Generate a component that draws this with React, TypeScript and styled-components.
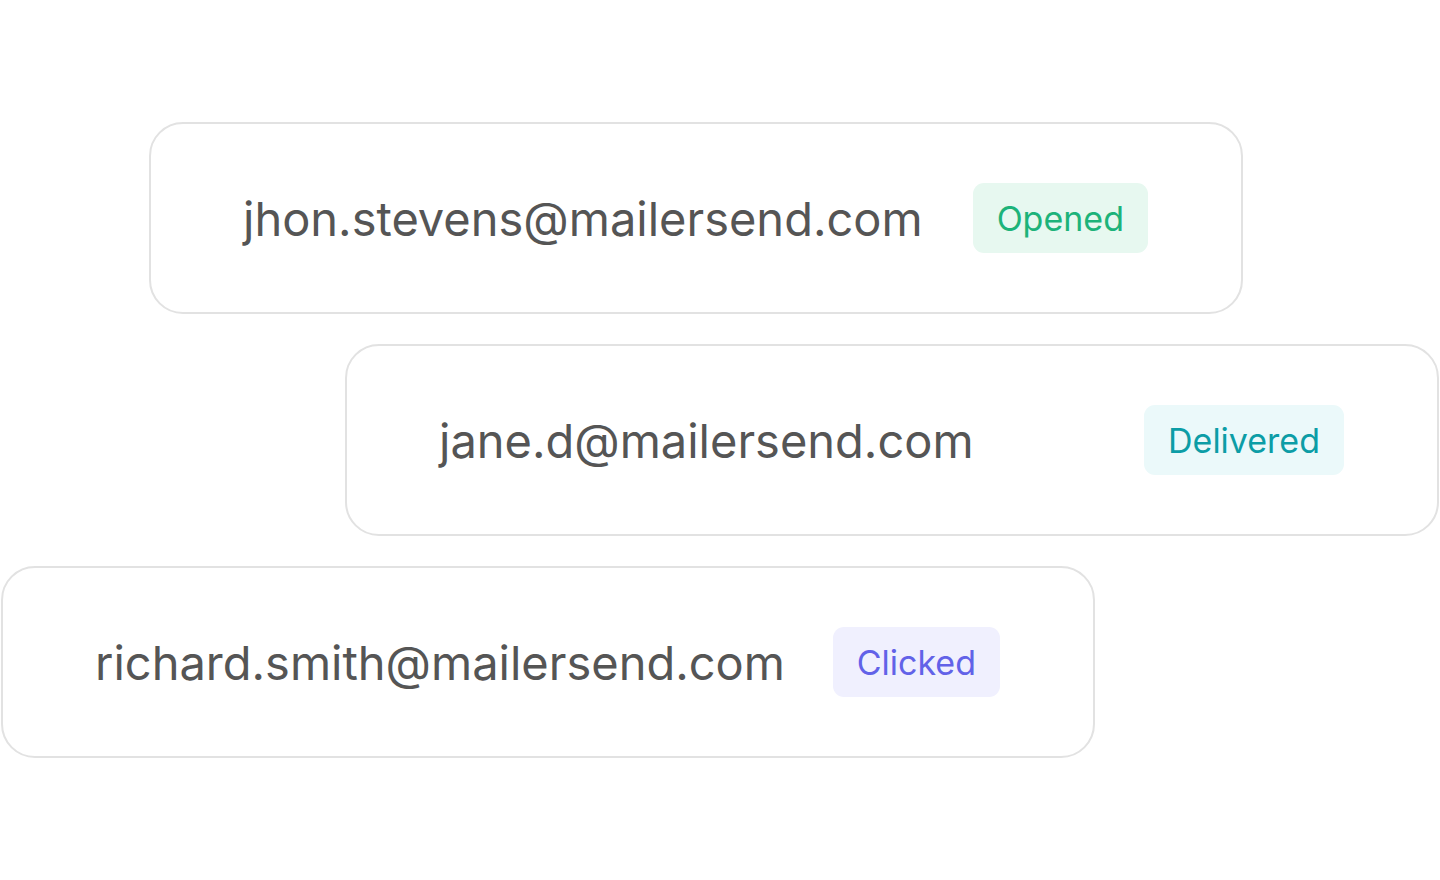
import React from "react";
import styled, { createGlobalStyle } from "styled-components";

const Global = createGlobalStyle`
  html, body { margin: 0; padding: 0; background: #ffffff; }
  body { font-family: Inter, "Noto Sans", sans-serif; }
`;

const Stage = styled.div`
  width: 1440px;
  height: 880px;
  display: flex;
  flex-direction: column;
  gap: 30px;
  padding-top: 122px;
  box-sizing: border-box;
  overflow: hidden;
`;

const Card = styled.div<{ $offset: number }>`
  margin-left: ${(p) => p.$offset}px;
  width: 1094px;
  height: 192px;
  flex: none;
  box-sizing: border-box;
  border: 2px solid #e2e2e2;
  border-radius: 34px;
  background: #ffffff;
  display: flex;
  align-items: center;
  justify-content: space-between;
  padding: 0 93px 0 92px;
`;

const Email = styled.span`
  font-size: 47px;
  font-weight: 400;
  color: #555555;
  letter-spacing: 0;
`;

const tones = {
  green: { fg: "#1db37a", bg: "#e7f8f0" },
  teal: { fg: "#0c9da6", bg: "#ebf9fa" },
  violet: { fg: "#6262e8", bg: "#f0f0fe" },
};

const Badge = styled.span<{ $tone: keyof typeof tones }>`
  display: inline-flex;
  align-items: center;
  height: 70px;
  padding: 0 24px;
  box-sizing: border-box;
  border-radius: 11px;
  font-size: 34px;
  font-weight: 400;
  color: ${(p) => tones[p.$tone].fg};
  background: ${(p) => tones[p.$tone].bg};
`;

const rows: { email: string; status: string; tone: keyof typeof tones; offset: number }[] = [
  { email: "jhon.stevens@mailersend.com", status: "Opened", tone: "green", offset: 149 },
  { email: "jane.d@mailersend.com", status: "Delivered", tone: "teal", offset: 345 },
  { email: "richard.smith@mailersend.com", status: "Clicked", tone: "violet", offset: 1 },
];

export default function App() {
  return (
    <>
      <Global />
      <Stage>
        {rows.map((r) => (
          <Card key={r.email} $offset={r.offset}>
            <Email>{r.email}</Email>
            <Badge $tone={r.tone}>{r.status}</Badge>
          </Card>
        ))}
      </Stage>
    </>
  );
}
